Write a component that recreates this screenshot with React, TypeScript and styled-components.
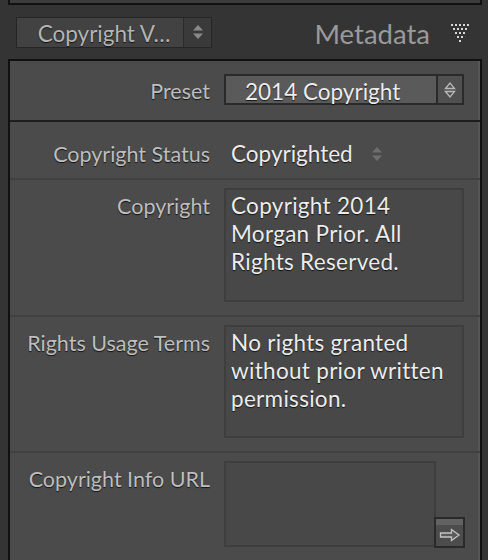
import React from 'react'
import styled, { createGlobalStyle } from 'styled-components'

const GlobalStyle = createGlobalStyle`
	html, body {
		margin: 0;
		padding: 0;
		background: #343434;
	}
	body {
		font-family: Lato, "Open Sans", sans-serif;
	}
`

const Page = styled.div`
	width: 488px;
	height: 560px;
	overflow: hidden;
	background: #343434;
`

const PrevPanel = styled.div`
	height: 3px;
	margin: 0 6px 0 8px;
	background: #3c3c3c;
	border: 2px solid #111;
	border-top: none;
`

const Header = styled.div`
	display: flex;
	align-items: center;
	justify-content: space-between;
	height: 54px;
	padding: 0 19px 0 16px;
	box-sizing: border-box;
`

const HeaderSelect = styled.div`
	display: flex;
	width: 196px;
	height: 31px;
	box-sizing: border-box;
	border: 1px solid #262626;
	background: #2c2c2c;
	gap: 1px;
`

const HeaderSelectText = styled.div`
	flex: 1;
	display: flex;
	align-items: center;
	justify-content: center;
	padding: 3px 0 0 8px;
	background: #424242;
	color: #b4b4b4;
	font-size: 22.5px;
	text-shadow: 0 1px 1px rgba(0, 0, 0, 0.7);
`

const HeaderStepper = styled.div`
	width: 27px;
	display: flex;
	align-items: center;
	justify-content: center;
	background: #3a3a3a;
`

const Title = styled.div`
	display: flex;
	align-items: center;
	gap: 21px;
	color: #9a9a9a;
	font-size: 27.5px;
	padding-top: 2px;
`

const Panel = styled.div`
	margin: 0 6px 0 8px;
	border: 2px solid #111;
	border-bottom: none;
	background: #4b4b4b;
	box-shadow: inset -2px 0 0 #565656;
`

const Row = styled.div<{ $top: number; $bottom: number; $center?: boolean; $line: string }>`
	display: grid;
	grid-template-columns: 200px 1fr;
	column-gap: 14px;
	align-items: ${p => (p.$center ? 'center' : 'start')};
	padding: ${p => p.$top}px 16px ${p => p.$bottom}px 0;
	border-bottom: 2px solid ${p => p.$line};
`

const Label = styled.div<{ $pad?: number }>`
	text-align: right;
	color: #bebebe;
	font-size: 21.5px;
	line-height: 28px;
	padding-top: ${p => p.$pad ?? 0}px;
	text-shadow: 0 1px 1px rgba(0, 0, 0, 0.75);
	white-space: nowrap;
`

const PresetSelect = styled.div`
	display: flex;
	height: 31px;
	box-sizing: border-box;
	border: 2px solid #2a2a2a;
	background: #2a2a2a;
	gap: 2px;
`

const PresetText = styled.div`
	flex: 1;
	display: flex;
	align-items: center;
	padding: 3px 0 0 19px;
	background: #5a5a5a;
	color: #ececec;
	font-size: 22.5px;
	text-shadow: 0 1px 1px rgba(0, 0, 0, 0.75);
`

const PresetStepper = styled.div`
	width: 24px;
	display: flex;
	align-items: center;
	justify-content: center;
	background: #505050;
`

const Value = styled.div`
	display: flex;
	align-items: center;
	gap: 18px;
	padding-left: 7px;
	color: #ececec;
	font-size: 22.5px;
	line-height: 28px;
	text-shadow: 0 1px 1px rgba(0, 0, 0, 0.75);
`

const TextBox = styled.div<{ $height: number; $width?: number }>`
	box-sizing: border-box;
	height: ${p => p.$height}px;
	width: ${p => (p.$width ? `${p.$width}px` : 'auto')};
	border: 2px solid #3e3e3e;
	background: #484848;
	padding: 2px 5px;
	color: #ececec;
	font-size: 22.5px;
	letter-spacing: 0.3px;
	line-height: 28px;
	text-shadow: 0 1px 1px rgba(0, 0, 0, 0.75);
`

const UrlField = styled.div`
	display: flex;
	align-items: flex-end;
`

const ArrowButton = styled.button`
	width: 31px;
	height: 31px;
	margin: 0 0 -1px -2px;
	padding: 0;
	box-sizing: border-box;
	border: 2px solid #2a2a2a;
	background: linear-gradient(#626262 0 6px, #4c4c4c 6px);
	display: flex;
	align-items: flex-end;
	justify-content: center;
	padding-bottom: 4px;
`

const Stepper = ({ outline, color }: { outline?: boolean; color: string }) => (
	<svg width="12" height="18" viewBox="0 0 12 18">
		{outline ? (
			<>
				<path d="M1.5 7.5 L6 2 L10.5 7.5 Z" fill="none" stroke={color} strokeWidth="1.3" />
				<path d="M1.5 10.5 L6 16 L10.5 10.5 Z" fill="none" stroke={color} strokeWidth="1.3" />
			</>
		) : (
			<>
				<path d="M1 7.5 L6 2 L11 7.5 Z" fill={color} />
				<path d="M1 10.5 L6 16 L11 10.5 Z" fill={color} />
			</>
		)}
	</svg>
)

const DotTriangle = () => (
	<svg width="18" height="18" viewBox="0 0 18 18">
		{[5, 4, 3, 2, 1].map((n, row) =>
			Array.from({ length: n }).map((_, i) => (
				<rect
					key={`${row}-${i}`}
					x={row * 2 + i * 4}
					y={row * 4}
					width="2"
					height="2"
					fill="#d8d8d8"
				/>
			))
		)}
	</svg>
)

const Arrow = () => (
	<svg width="22" height="14" viewBox="0 0 22 14">
		<path
			d="M1.5 5 H12.5 V1.5 L20 7 L12.5 12.5 V9 H1.5 Z"
			fill="#5a5a5a"
			stroke="#c4c4c4"
			strokeWidth="1.3"
			strokeLinejoin="miter"
		/>
	</svg>
)

export default function App() {
	return (
		<Page>
			<GlobalStyle />
			<PrevPanel />
			<Header>
				<HeaderSelect>
					<HeaderSelectText>Copyright V…</HeaderSelectText>
					<HeaderStepper>
						<Stepper color="#8a8a8a" />
					</HeaderStepper>
				</HeaderSelect>
				<Title>
					Metadata
					<DotTriangle />
				</Title>
			</Header>
			<Panel>
				<Row $top={13} $bottom={15} $center $line="#1e1e1e">
					<Label $pad={3}>Preset</Label>
					<PresetSelect>
						<PresetText>2014 Copyright</PresetText>
						<PresetStepper>
							<Stepper outline color="#b8b8b8" />
						</PresetStepper>
					</PresetSelect>
				</Row>
				<Row $top={18} $bottom={10} $line="#414141">
					<Label>Copyright Status</Label>
					<Value>
						Copyrighted
						<Stepper color="#6e6e6e" />
					</Value>
				</Row>
				<Row $top={8} $bottom={13} $line="#414141">
					<Label $pad={4}>Copyright</Label>
					<TextBox $height={114}>
						Copyright 2014
						<br />
						Morgan Prior. All
						<br />
						Rights Reserved.
					</TextBox>
				</Row>
				<Row $top={8} $bottom={13} $line="#414141">
					<Label $pad={4}>Rights Usage Terms</Label>
					<TextBox $height={113}>
						No rights granted
						<br />
						without prior written
						<br />
						permission.
					</TextBox>
				</Row>
				<Row $top={8} $bottom={20} $line="transparent">
					<Label $pad={4}>Copyright Info URL</Label>
					<UrlField>
						<TextBox $height={86} $width={212} />
						<ArrowButton aria-label="Go to URL">
							<Arrow />
						</ArrowButton>
					</UrlField>
				</Row>
			</Panel>
		</Page>
	)
}
